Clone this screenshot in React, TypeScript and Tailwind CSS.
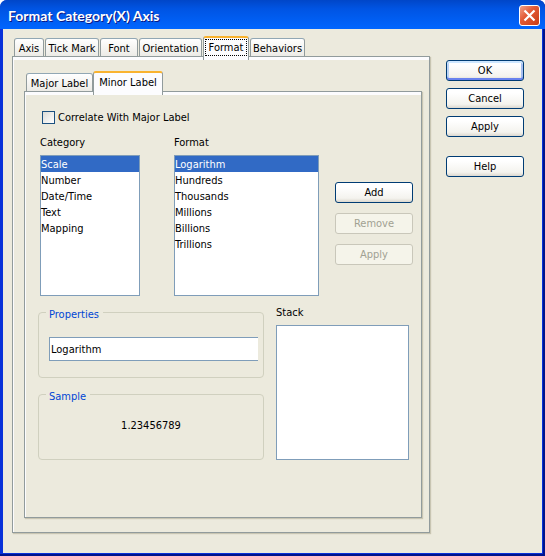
import React, { useState } from "react";
import clsx from "clsx";

const tabs = [
  { name: "Axis", width: "w-[30px]" },
  { name: "Tick Mark", width: "w-[54px]" },
  { name: "Font", width: "w-[38px]" },
  { name: "Orientation", width: "w-[63px]" },
  { name: "Format", width: "w-[46px]" },
  { name: "Behaviors", width: "w-[55px]" },
];

const labelTabs = [
  { name: "Major Label", width: "w-[67px]" },
  { name: "Minor Label", width: "w-[70px]" },
];

const formats: Record<string, string[]> = {
  Scale: ["Logarithm", "Hundreds", "Thousands", "Millions", "Billions", "Trillions"],
  Number: [],
  "Date/Time": [],
  Text: [],
  Mapping: [],
};

type TabStripProps = {
  label: string;
  items: { name: string; width: string }[];
  active: string;
  onSelect: (name: string) => void;
  focusRing?: boolean;
  className?: string;
};

function TabStrip({ label, items, active, onSelect, focusRing, className }: TabStripProps) {
  return (
    <div role="tablist" aria-label={label} className={clsx("relative flex items-end pl-0.5", className)}>
      {items.map(({ name, width }) => (
        <button
          key={name}
          type="button"
          role="tab"
          aria-selected={name === active}
          onClick={() => onSelect(name)}
          className={clsx(
            "flex shrink-0 justify-center whitespace-nowrap rounded-t-[3px] border-x border-[#919b9c]",
            width,
            name === active
              ? "-mb-1 h-6 border-t-2 border-t-[#f9b32f] bg-[#fcfcfe]"
              : "h-[18px] border-t border-t-[#91a7b4] bg-linear-to-b from-white to-[#ecebe6]",
          )}
        >
          <span
            className={clsx(
              name === active && focusRing
                ? "mt-px h-[17px] w-[42px] border border-dotted border-black leading-[15px]"
                : "leading-5",
            )}
          >
            {name}
          </span>
        </button>
      ))}
    </div>
  );
}

function DialogButton({ children, primary, disabled }: { children: string; primary?: boolean; disabled?: boolean }) {
  return (
    <button
      type="button"
      disabled={disabled}
      className={clsx(
        "h-[21px] w-[78px] rounded-[3px] border text-center leading-[18px]",
        disabled
          ? "border-[#c9c7ba] bg-[#f5f4ea] text-[#a1a192]"
          : "border-[#003c74] bg-linear-to-b from-white from-20% via-[#f4f3ee] via-80% to-[#dcd8cf]",
        primary && "shadow-[inset_0_2px_0_#cee7ff,inset_0_-2px_0_#6982ee,inset_2px_0_0_#bcd4f6,inset_-2px_0_0_#a6bef0]",
      )}
    >
      {children}
    </button>
  );
}

type ListBoxProps = {
  label: string;
  items: string[];
  selected?: string;
  onSelect?: (name: string) => void;
  className?: string;
  height?: string;
};

function ListBox({ label, items, selected, onSelect, className, height = "h-[141px]" }: ListBoxProps) {
  return (
    <div className={className}>
      <div className="h-4 leading-[18px]">{label}</div>
      <ul role="listbox" aria-label={label} className={clsx("mt-[5px] border border-[#7f9db9] bg-white", height)}>
        {items.map((item) => (
          <li
            key={item}
            role="option"
            aria-selected={item === selected}
            onClick={() => onSelect?.(item)}
            className={clsx("h-4 leading-[18px]", item === selected && "bg-[#316ac5] text-white")}
          >
            {item}
          </li>
        ))}
      </ul>
    </div>
  );
}

function GroupBox({ title, children }: { title: string; children: React.ReactNode }) {
  return (
    <fieldset className="h-[72px] min-w-0 rounded-[4px] border border-[#d0d0bf] pl-[10px]">
      <legend className="-ml-[3px] h-3 pr-1 pl-[3px] leading-[18px] text-[#0046d5]">{title}</legend>
      {children}
    </fieldset>
  );
}

export default function App() {
  const [tab, setTab] = useState("Format");
  const [labelTab, setLabelTab] = useState("Minor Label");
  const [category, setCategory] = useState("Scale");
  const [format, setFormat] = useState("Logarithm");

  return (
    <div className="flex min-h-screen flex-col rounded-t-[7px] bg-[#0831d9] font-['DejaVu_Sans_Condensed','Noto_Sans',sans-serif] text-[11px] text-black shadow-[inset_-2px_-2px_#00138c]">
      <header className="flex h-[29px] items-center justify-between rounded-t-[7px] bg-linear-to-b from-[#0046c8] via-[#0054e3] via-30% to-[#0066ff] pt-0.5 pr-[5px] pl-2">
        <h1 className="font-['Lato',sans-serif] text-[14px] font-bold text-white [text-shadow:1px_1px_#0a1883]">
          Format Category(X) Axis
        </h1>
        <button
          type="button"
          aria-label="Close"
          className="flex size-[21px] items-center justify-center rounded-[3px] border border-white bg-linear-to-br from-[#f0a088] via-[#e35b37] via-40% to-[#c83c10]"
        >
          <svg viewBox="0 0 13 13" className="size-[13px]" fill="none" stroke="white" strokeWidth="2.2">
            <path d="M1.5 1.5L11.5 11.5M11.5 1.5L1.5 11.5" />
          </svg>
        </button>
      </header>

      <main className="mx-[3px] mb-[3px] flex flex-1 gap-4 bg-[#eceadd] pr-[18px] pb-5 pl-[9px]">
        <div className="flex flex-1 flex-col pt-[9px]">
          <TabStrip
            label="Axis settings"
            items={tabs}
            active={tab}
            onSelect={setTab}
            focusRing
            className="h-[18px] gap-px"
          />
          <section className="flex flex-1 flex-col border border-[#919b9c] pr-[7px] pb-[14px] pl-[11px] shadow-[inset_1px_3px_#fcfcfe,1px_1px_1px_#c8c5b2]">
            <TabStrip
              label="Label type"
              items={labelTabs}
              active={labelTab}
              onSelect={setLabelTab}
              className="mt-4 h-[18px]"
            />
            <div className="flex-1 border border-[#919b9c] pt-[17px] pr-2 pl-[13px] shadow-[inset_1px_3px_#fcfcfe,1px_1px_1px_#c8c5b2]">
              <label className="ml-1 flex h-4 items-center gap-[3px]">
                <input
                  type="checkbox"
                  className="size-[13px] appearance-none border border-[#1c5180] bg-linear-to-br from-[#dcdcd7] to-white checked:bg-[#21a121]"
                />
                <span className="h-4 leading-[18px]">Correlate With Major Label</span>
              </label>

              <div className="mt-[9px] flex pl-0.5">
                <ListBox
                  label="Category"
                  items={Object.keys(formats)}
                  selected={category}
                  onSelect={setCategory}
                  className="w-[100px]"
                />
                <ListBox
                  label="Format"
                  items={formats[category]}
                  selected={format}
                  onSelect={setFormat}
                  className="ml-[34px] w-[145px]"
                />
                <div className="ml-4 flex flex-col gap-[10px] pt-12">
                  <DialogButton>Add</DialogButton>
                  <DialogButton disabled>Remove</DialogButton>
                  <DialogButton disabled>Apply</DialogButton>
                </div>
              </div>

              <div className="mt-2 flex gap-3">
                <div className="flex w-[226px] flex-col gap-[10px] pt-0.5">
                  <GroupBox title="Properties">
                    <input
                      type="text"
                      aria-label="Format properties"
                      defaultValue="Logarithm"
                      className="mt-[19px] block h-6 w-[209px] border-y border-l border-[#7f9db9] bg-white px-px"
                    />
                  </GroupBox>
                  <GroupBox title="Sample">
                    <div className="mt-[18px] pr-[10px] text-center leading-4">1.23456789</div>
                  </GroupBox>
                </div>
                <ListBox label="Stack" items={[]} className="w-[133px]" height="h-[135px]" />
              </div>
            </div>
          </section>
        </div>

        <div className="flex flex-col gap-[7px] pt-[31px]">
          <DialogButton primary>OK</DialogButton>
          <DialogButton>Cancel</DialogButton>
          <DialogButton>Apply</DialogButton>
          <div className="pt-3">
            <DialogButton>Help</DialogButton>
          </div>
        </div>
      </main>
    </div>
  );
}
